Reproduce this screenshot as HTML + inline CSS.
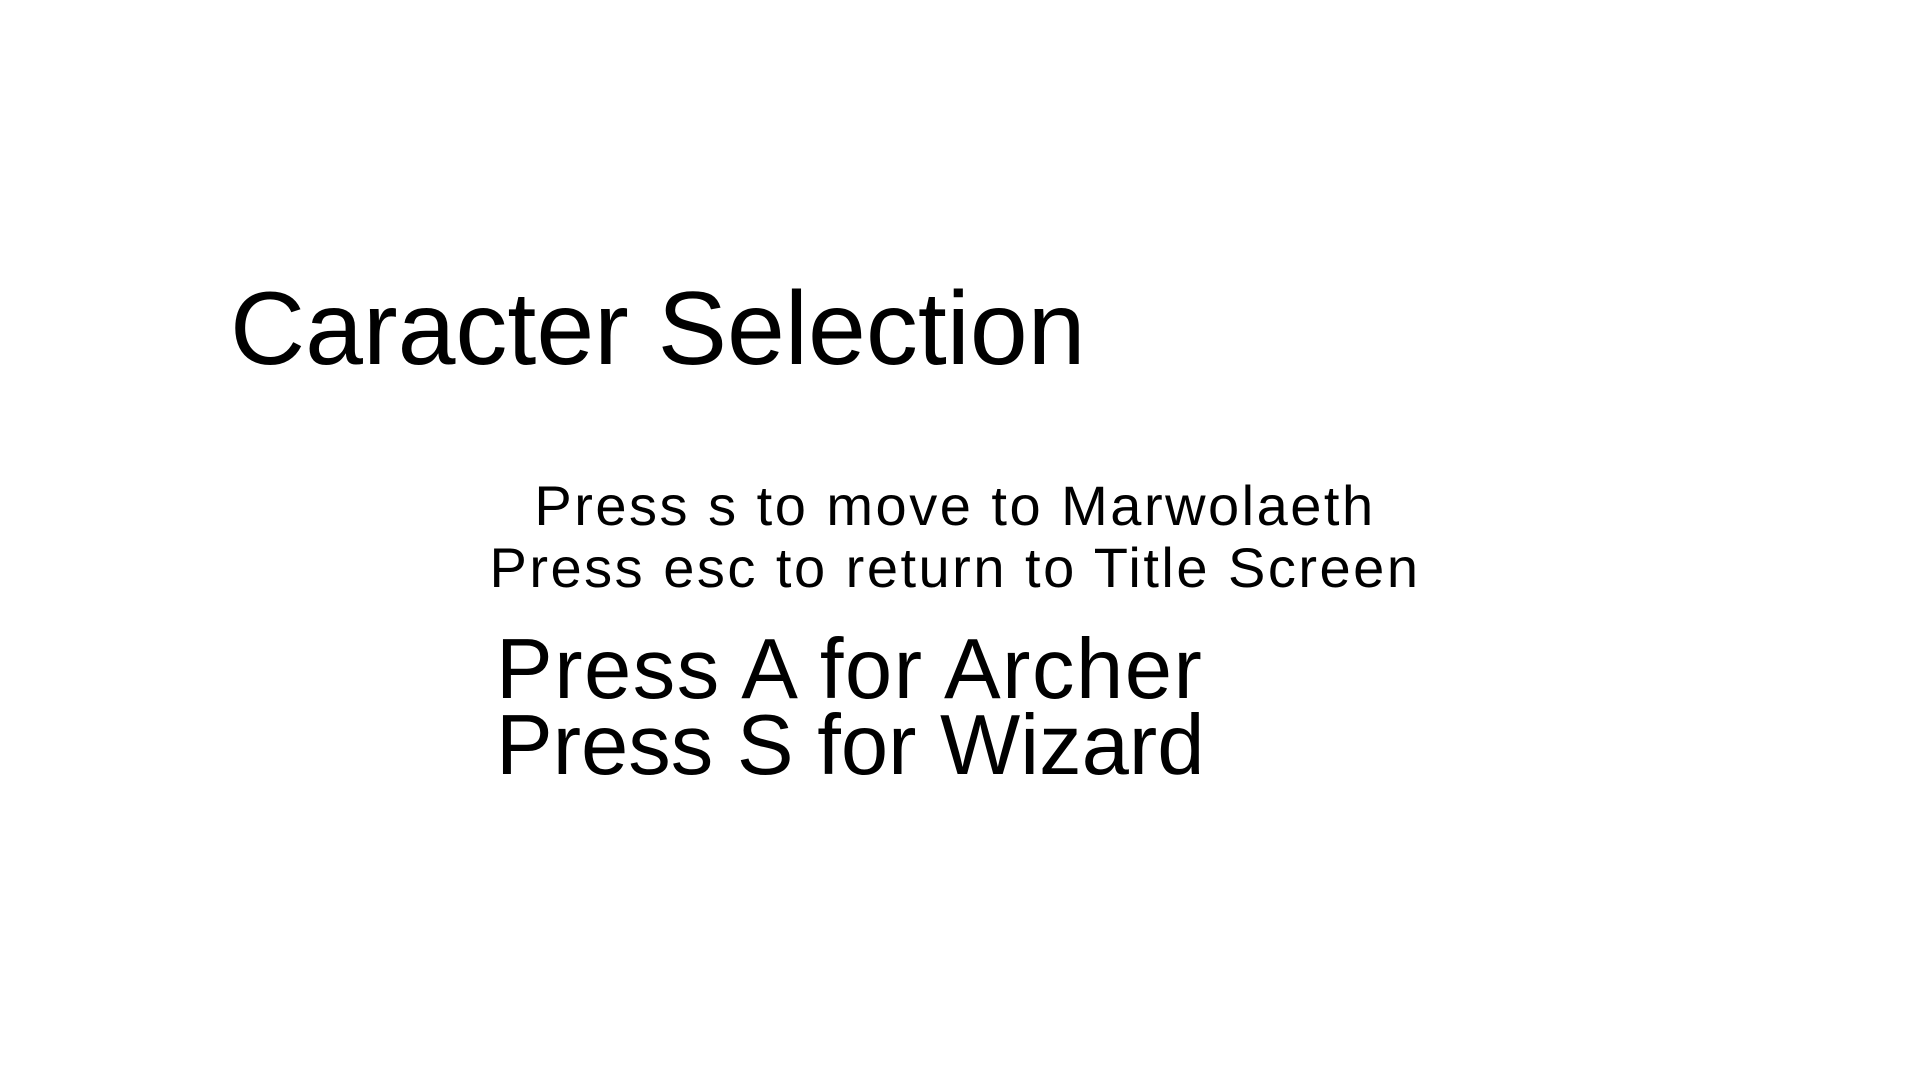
<!DOCTYPE html>
<html><head><meta charset="utf-8"><style>
html,body{margin:0;padding:0;background:#fff;width:1920px;height:1080px;overflow:hidden;}
div{position:absolute;font-family:"Liberation Sans","Noto Sans CJK JP",sans-serif;color:#000;white-space:nowrap;}
.t{left:230px;top:277px;font-size:104px;line-height:104px;}
.m{left:455px;width:1000px;text-align:center;font-size:56px;line-height:56px;letter-spacing:2.5px;}
.b{left:496px;font-size:85px;line-height:85px;}
</style></head><body>
<div class="t">Caracter Selection</div>
<div class="m" style="top:478px">Press s to move to Marwolaeth</div>
<div class="m" style="top:540px">Press esc to return to Title Screen</div>
<div class="b" style="top:627px;letter-spacing:1.5px">Press A for Archer</div>
<div class="b" style="top:703px">Press S for Wizard</div>
</body></html>
